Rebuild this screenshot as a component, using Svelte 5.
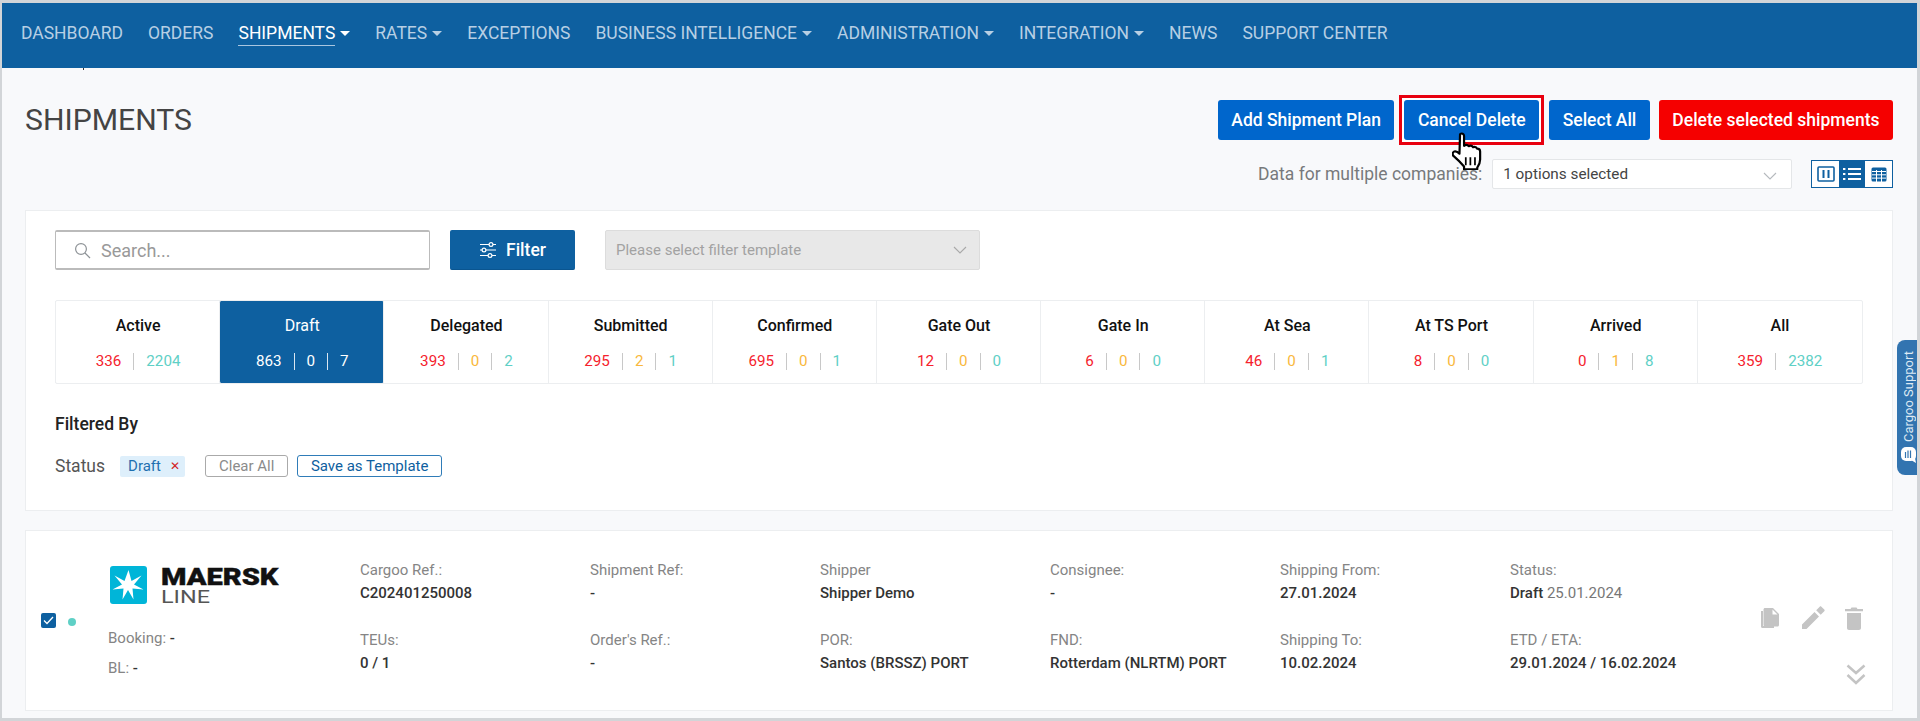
<script>
  const navItems = [
    { label: 'DASHBOARD' },
    { label: 'ORDERS' },
    { label: 'SHIPMENTS', caret: true, active: true },
    { label: 'RATES', caret: true },
    { label: 'EXCEPTIONS' },
    { label: 'BUSINESS INTELLIGENCE', caret: true },
    { label: 'ADMINISTRATION', caret: true },
    { label: 'INTEGRATION', caret: true },
    { label: 'NEWS' },
    { label: 'SUPPORT CENTER' }
  ];

  const tabs = [
    { name: 'Active', red: 336, green: 2204 },
    { name: 'Draft', red: 863, amber: 0, green: 7, active: true },
    { name: 'Delegated', red: 393, amber: 0, green: 2 },
    { name: 'Submitted', red: 295, amber: 2, green: 1 },
    { name: 'Confirmed', red: 695, amber: 0, green: 1 },
    { name: 'Gate Out', red: 12, amber: 0, green: 0 },
    { name: 'Gate In', red: 6, amber: 0, green: 0 },
    { name: 'At Sea', red: 46, amber: 0, green: 1 },
    { name: 'At TS Port', red: 8, amber: 0, green: 0 },
    { name: 'Arrived', red: 0, amber: 1, green: 8 },
    { name: 'All', red: 359, green: 2382 }
  ];

  const fields = [
    ['Cargoo Ref.:', 'C202401250008', 'TEUs:', '0 / 1'],
    ['Shipment Ref:', '-', "Order's Ref.:", '-'],
    ['Shipper', 'Shipper Demo', 'POR:', 'Santos (BRSSZ) PORT'],
    ['Consignee:', '-', 'FND:', 'Rotterdam (NLRTM) PORT'],
    ['Shipping From:', '27.01.2024', 'Shipping To:', '10.02.2024']
  ];
</script>

<div class="frame">
  <nav class="nav">
    {#each navItems as item}
      <span class="nav-item" class:active={item.active}>
        <span class="nav-label">{item.label}</span>
        {#if item.caret}<i class="caret"></i>{/if}
      </span>
    {/each}
  </nav>

  <main class="page">
    <i class="crumb-bit"></i>
    <div class="head">
      <h1>SHIPMENTS</h1>
      <div class="head-right">
        <div class="actions">
          <button class="btn">Add Shipment Plan</button>
          <span class="highlight"><button class="btn">Cancel Delete</button></span>
          <button class="btn">Select All</button>
          <button class="btn danger">Delete selected shipments</button>
        </div>
        <div class="companies">
          <span class="companies-label">Data for multiple companies:</span>
          <div class="select">
            <span>1 options selected</span>
            <svg width="14" height="8" viewBox="0 0 14 8"><path d="M1 1l6 6 6-6" fill="none" stroke="#b5b9bd" stroke-width="1.1"/></svg>
          </div>
          <div class="views">
            <span class="view">
              <svg width="18" height="16" viewBox="0 0 18 16"><rect x="1" y="1" width="16" height="14" rx="1" fill="none" stroke="#0e60a0" stroke-width="1.6"/><path d="M6.500 4v8M11.500 4v8" stroke="#0e60a0" stroke-width="2"/></svg>
            </span>
            <span class="view on">
              <svg width="18" height="14" viewBox="0 0 18 14"><path d="M5 2h13M5 7h13M5 12h13" stroke="#fff" stroke-width="2"/><path d="M0 2h2.400M0 7h2.400M0 12h2.400" stroke="#fff" stroke-width="2"/></svg>
            </span>
            <span class="view">
              <svg width="16" height="15" viewBox="0 0 16 15"><rect x="0.500" y="0.500" width="15" height="14" rx="1.500" fill="#0e60a0"/><path d="M1 4.500h14M1 7.800h14M1 11.100h14M5.500 3v12M10.500 3v12" stroke="#fff" stroke-width="1"/></svg>
            </span>
          </div>
        </div>
      </div>
    </div>

    <section class="card filters">
      <div class="filter-row">
        <div class="search">
          <svg width="17" height="17" viewBox="0 0 17 17"><circle cx="7" cy="7" r="5.400" fill="none" stroke="#8d9296" stroke-width="1.200"/><path d="M11 11l5 5" stroke="#8d9296" stroke-width="1.200"/></svg>
          <span>Search...</span>
        </div>
        <button class="filter-btn">
          <svg width="18" height="18" viewBox="0 0 18 18" fill="none" stroke="#fff" stroke-width="1.200"><path d="M1 3.500h9M14 3.500h3M1 9h2M7 9h10M1 14.500h8M13 14.500h4"/><circle cx="12" cy="3.500" r="1.900"/><circle cx="5" cy="9" r="1.900"/><circle cx="11" cy="14.500" r="1.900"/></svg>
          Filter
        </button>
        <div class="template">
          <span>Please select filter template</span>
          <svg width="14" height="8" viewBox="0 0 14 8"><path d="M1 1l6 6 6-6" fill="none" stroke="#a9a9a9" stroke-width="1.100"/></svg>
        </div>
      </div>

      <div class="tabs">
        {#each tabs as tab}
          <div class="tab" class:active={tab.active}>
            <div class="tab-name">{tab.name}</div>
            <div class="counts">
              <span class="red">{tab.red}</span>
              {#if tab.amber !== undefined}
                <i class="sep"></i><span class="amber">{tab.amber}</span>
              {/if}
              <i class="sep"></i><span class="green">{tab.green}</span>
            </div>
          </div>
        {/each}
      </div>

      <div class="filtered-title">Filtered By</div>
      <div class="filtered-row">
        <span class="status-label">Status</span>
        <span class="chip">Draft <span class="chip-x">✕</span></span>
        <button class="mini grey">Clear All</button>
        <button class="mini blue">Save as Template</button>
      </div>
    </section>

    <section class="card shipment">
      <div class="pick">
        <span class="check">
          <svg width="11" height="9" viewBox="0 0 11 9"><path d="M1 4.500l3 3 6-6.500" fill="none" stroke="#fff" stroke-width="1.300"/></svg>
        </span>
        <i class="dot"></i>
      </div>
      <div class="carrier">
        <div class="logo">
          <svg width="37" height="38" viewBox="0 0 37 38">
            <rect width="37" height="38" rx="3" fill="#00b5d8"/>
            <path d="M18.500 4l3 11 10-5.500-7.500 9 9.500 5-11-1 1 11-5.500-9.500-5.500 9.500 1-11-11 1 9.500-5-7.500-9 10 5.500z" fill="#fff"/>
          </svg>
          <div class="logo-text">
            <span class="maersk">MAERSK</span>
            <span class="line">LINE</span>
          </div>
        </div>
        <div class="carrier-meta">Booking: <b>-</b></div>
        <div class="carrier-meta">BL: <b>-</b></div>
      </div>
      <div class="fields">
        {#each fields as f}
          <div class="field">
            <div class="lbl">{f[0]}</div>
            <div class="val">{f[1]}</div>
            <div class="lbl second">{f[2]}</div>
            <div class="val">{f[3]}</div>
          </div>
        {/each}
        <div class="field">
          <div class="lbl">Status:</div>
          <div class="val">Draft <span class="date">25.01.2024</span></div>
          <div class="lbl second">ETD / ETA:</div>
          <div class="val">29.01.2024 / 16.02.2024</div>
        </div>
      </div>
      <div class="row-actions">
        <div class="row-icons">
          <svg width="22" height="23" viewBox="0 0 22 23" fill="#c4c4c4"><path d="M2 4h2v15h11v2H3.500C2.600 21 2 20.400 2 19.500z"/><path d="M6 1h8l6 6v11c0 .8-.6 1.500-1.500 1.500H6c-.8 0-1.500-.7-1.500-1.500V2.500C4.500 1.700 5.200 1 6 1zm7.500 1.500V7.500h5z" fill-rule="evenodd"/></svg>
          <svg width="24" height="24" viewBox="0 0 24 24" fill="#c4c4c4"><path d="M1 18.500V23h4.500L18 10.500 13.500 6zM23.300 5.300c.5-.5.5-1.200 0-1.700L20.400.7c-.5-.5-1.200-.5-1.700 0l-3.500 3.500 4.500 4.500z"/></svg>
          <svg width="18" height="24" viewBox="0 0 18 24" fill="#c4c4c4"><path d="M2 7h14v15c0 1-.8 2-2 2H4c-1.200 0-2-1-2-2zM0 3h5.500l1-1.500h5l1 1.500H18v2.200H0z"/></svg>
        </div>
        <svg class="expand" width="20" height="21" viewBox="0 0 20 21" fill="none" stroke="#c4c4c4" stroke-width="2.500"><path d="M1.500 1.500L10 9l8.500-7.500M1.500 11L10 19l8.500-8"/></svg>
      </div>
    </section>

    <div class="support">
      <span>Cargoo Support</span>
      <svg width="15" height="16" viewBox="0 0 15 16"><rect x="0" y="0" width="15" height="14" rx="5" fill="#fff"/><path d="M10 13l5 3-1-5z" fill="#fff"/><path d="M4.500 5v6M7 3.500V11M9.500 3.500V11" stroke="#3274b0" stroke-width="1.200"/></svg>
    </div>

    <svg class="cursor" width="31" height="38" viewBox="1 0 27 33">
      <path d="M8 2c1.500-1.500 3.500-.5 3.500 1.500V12c1.500-1 3-1 4 .3 1.500-.8 3-.5 3.800.8 1.500-.5 3 0 3.700 1.400 1.500 0 2.500 1 2.500 2.500v7c0 3-1 5-2.500 7v1.500H11.500V30C9 27 6 24 2.500 21c-1.500-1.500-1-3.500.5-4 1.500-.5 3 .3 4.500 1.800z" fill="#fff" stroke="#000" stroke-width="1.900" stroke-linejoin="round"/>
      <path d="M13 22v7M17 22v7M21 22v7" stroke="#000" stroke-width="1.500"/>
    </svg>
  </main>
</div>

<style>
  :global(body) {
    margin: 0;
    background: #d2d5d8;
    font-family: Roboto, "Liberation Sans", sans-serif;
  }

  .frame {
    height: 721px;
    box-sizing: border-box;
    padding: 3px 3px 3px 2px;
    overflow: hidden;
  }

  .nav {
    height: 65px;
    background: #0e60a0;
    display: flex;
    align-items: center;
    gap: 25px;
    padding: 0 0 5px 19px;
    box-sizing: border-box;
  }

  .nav-item {
    display: flex;
    align-items: center;
    color: #b7cfe4;
    font-size: 17.500px;
  }

  .nav-item.active {
    color: #fff;
  }

  .nav-item.active .nav-label {
    border-bottom: 1px solid #a9c6e0;
    padding-bottom: 2px;
    margin-bottom: -3px;
  }

  .caret {
    width: 0;
    height: 0;
    border-left: 5px solid transparent;
    border-right: 5px solid transparent;
    border-top: 5px solid currentColor;
    margin-left: 5px;
  }

  .page {
    position: relative;
    height: 650px;
    background: #f8f9fb;
    padding: 0 24px 0 23px;
    overflow: hidden;
  }

  .crumb-bit {
    position: absolute;
    left: 81px;
    top: 0;
    width: 1px;
    height: 2px;
    background: #333;
  }

  .head {
    display: flex;
    justify-content: space-between;
    align-items: flex-start;
    height: 142px;
  }

  h1 {
    margin: 32px 0 0;
    font-size: 30.200px;
    font-weight: 400;
    line-height: 40px;
    color: #444;
  }

  .head-right {
    display: flex;
    flex-direction: column;
    align-items: flex-end;
    padding-top: 32px;
  }

  .actions {
    display: flex;
    align-items: center;
    gap: 10px;
    height: 40px;
  }

  .btn {
    height: 40px;
    padding: 0 13.500px;
    border: 0;
    border-radius: 3px;
    background: #0066cc;
    color: #fff;
    font: 500 17.500px Roboto, sans-serif;
  }

  .btn.danger {
    background: #f50000;
    margin-left: -1px;
  }

  .highlight {
    display: flex;
    border: 3px solid #e8000f;
    padding: 2px;
    margin: 0 -5px;
    background: #fff;
  }

  .companies {
    display: flex;
    align-items: center;
    margin-top: 19px;
    height: 30px;
  }

  .companies-label {
    color: #77797c;
    font-size: 17.500px;
    margin-right: 10px;
  }

  .select {
    width: 300px;
    height: 30px;
    box-sizing: border-box;
    border: 1px solid #e4e6e8;
    border-radius: 2px;
    background: #fff;
    display: flex;
    align-items: center;
    justify-content: space-between;
    padding: 0 14px 0 10px;
    font-size: 15.300px;
    color: #444;
  }

  .select svg {
    margin-top: 4px;
  }

  .views {
    display: flex;
    margin-left: 19px;
    border: 1px solid #0e60a0;
    height: 26px;
  }

  .view {
    width: 26.600px;
    display: flex;
    align-items: center;
    justify-content: center;
    background: #fff;
  }

  .view.on {
    background: #0e60a0;
  }

  .card {
    background: #fff;
    border: 1px solid #eceef0;
    box-sizing: border-box;
  }

  .filters {
    height: 301px;
    padding: 19px 29px 0;
  }

  .filter-row {
    display: flex;
    gap: 20px;
  }

  .search {
    width: 375px;
    height: 40px;
    box-sizing: border-box;
    border: 1px solid #bbb;
    border-width: 2px 1px;
    border-radius: 2px;
    display: flex;
    align-items: center;
    gap: 10px;
    padding-left: 18px;
    color: #999;
    font-size: 18px;
    background: #fff;
  }

  .filter-btn {
    width: 125px;
    height: 40px;
    border: 0;
    border-bottom: 1px solid #0a5590;
    border-radius: 2px;
    background: #0e60a0;
    color: #fff;
    font: 500 17.500px Roboto, sans-serif;
    display: flex;
    align-items: center;
    justify-content: center;
    gap: 9px;
  }

  .template {
    width: 375px;
    height: 40px;
    margin-left: 10px;
    box-sizing: border-box;
    border: 1px solid #dcdcdc;
    border-radius: 2px;
    background: #e8e8e8;
    display: flex;
    align-items: center;
    justify-content: space-between;
    padding: 0 12px 0 10px;
    color: #a2a2a2;
    font-size: 15px;
  }

  .tabs {
    display: grid;
    grid-template-columns: repeat(11, 1fr);
    margin-top: 30px;
    width: 1808px;
    height: 84px;
    box-sizing: border-box;
    border: 1px solid #eceef0;
    border-radius: 2px;
  }

  .tab {
    text-align: center;
    border-left: 1px solid #eceef0;
    color: #111;
    padding-top: 15px;
    font-size: 16px;
    font-weight: 500;
    margin-left: -1px;
  }

  .tab-name {
    line-height: 20px;
  }

  .tab.active {
    background: #0e60a0;
    color: #fff;
    border-radius: 2px;
    font-weight: 400;
  }

  .counts {
    margin-top: 16px;
    display: flex;
    justify-content: center;
    align-items: center;
    gap: 12px;
    font-size: 15.200px;
    font-weight: 400;
    line-height: 18px;
  }

  .sep {
    width: 1px;
    height: 17px;
    background: #c8c8c8;
  }

  .red { color: #f5222d; }
  .amber { color: #f9b83c; }
  .green { color: #5fd0c6; }

  .tab.active .counts span { color: #fff; }
  .tab.active .sep { background: #d9e6f1; }

  .filtered-title {
    margin-top: 30px;
    font-size: 17.500px;
    font-weight: 500;
    line-height: 21px;
    color: #222;
  }

  .filtered-row {
    display: flex;
    align-items: center;
    margin-top: 20px;
    height: 22px;
  }

  .status-label {
    color: #555;
    font-size: 17.500px;
    margin-right: 15px;
  }

  .chip {
    height: 21px;
    display: flex;
    align-items: center;
    gap: 9px;
    padding: 0 5px 0 8px;
    background: #deeffb;
    border-radius: 2px;
    color: #1e6fb0;
    font-size: 15px;
    margin-right: 20px;
  }

  .chip-x {
    color: #d32222;
    font-size: 12px;
  }

  .mini {
    height: 22px;
    padding: 0 13px;
    border-radius: 3px;
    background: #fff;
    font: 400 15px Roboto, sans-serif;
    box-sizing: border-box;
  }

  .mini.grey {
    border: 1.500px solid #aaa;
    color: #8b8b8b;
    margin-right: 9px;
  }

  .mini.blue {
    border: 1px solid #2f7cb8;
    color: #0e60a0;
    padding: 0 12.500px;
  }

  .shipment {
    position: relative;
    height: 181px;
    margin-top: 19px;
    display: flex;
  }

  .pick {
    width: 82px;
    display: flex;
    align-items: center;
    flex: none;
    padding: 0 0 0 15px;
    box-sizing: border-box;
  }

  .check {
    width: 15px;
    height: 15px;
    background: #0e60a0;
    border-radius: 2px;
    display: flex;
    align-items: center;
    justify-content: center;
    margin-top: -1px;
  }

  .dot {
    width: 8px;
    height: 8px;
    border-radius: 50%;
    background: #5fd0c6;
    margin-left: 12px;
    margin-top: 3px;
  }

  .carrier {
    width: 252px;
    flex: none;
    padding-top: 35px;
  }

  .logo {
    display: flex;
    gap: 14px;
    margin-left: 2px;
    margin-bottom: 23px;
  }

  .logo-text {
    display: flex;
    flex-direction: column;
  }

  .maersk {
    font: 900 24px/23px Roboto, sans-serif;
    color: #111;
    transform: scaleX(1.21);
    transform-origin: left;
    -webkit-text-stroke: 0.4px #111;
  }

  .line {
    font: 400 18px/16px Roboto, sans-serif;
    color: #555;
    transform: scaleX(1.3);
    transform-origin: left;
  }

  .carrier-meta {
    color: #858585;
    font-size: 15px;
    line-height: 20px;
    margin-bottom: 10px;
  }

  .carrier-meta b {
    color: #333;
    font-weight: 500;
  }

  .fields {
    display: grid;
    grid-template-columns: repeat(6, 230px);
    padding-top: 29px;
    flex: none;
  }

  .lbl {
    color: #858585;
    font-size: 15px;
    line-height: 20px;
  }

  .lbl.second {
    margin-top: 27px;
  }

  .val {
    color: #333;
    font-size: 15px;
    font-weight: 500;
    line-height: 20px;
    margin-top: 3px;
  }

  .date {
    color: #777;
    font-weight: 400;
  }

  .row-actions {
    position: absolute;
    right: 29px;
    top: 75px;
    display: flex;
    flex-direction: column;
    align-items: flex-end;
  }

  .row-icons {
    display: flex;
    align-items: center;
    gap: 20px;
  }

  .expand {
    margin-top: 34px;
    margin-right: -3px;
  }

  .support {
    position: absolute;
    right: 0;
    top: 272px;
    width: 20px;
    height: 135px;
    background: #3274b0;
    border-radius: 8px 0 0 8px;
    color: #dfeaf4;
    font-size: 13px;
    display: flex;
    flex-direction: column;
    align-items: center;
    justify-content: flex-end;
    padding: 0 0 12px 2px;
    box-sizing: border-box;
    gap: 5px;
  }

  .support span {
    writing-mode: vertical-rl;
    transform: rotate(180deg);
    white-space: nowrap;
  }

  .cursor {
    position: absolute;
    left: 1450px;
    top: 64px;
  }
</style>
